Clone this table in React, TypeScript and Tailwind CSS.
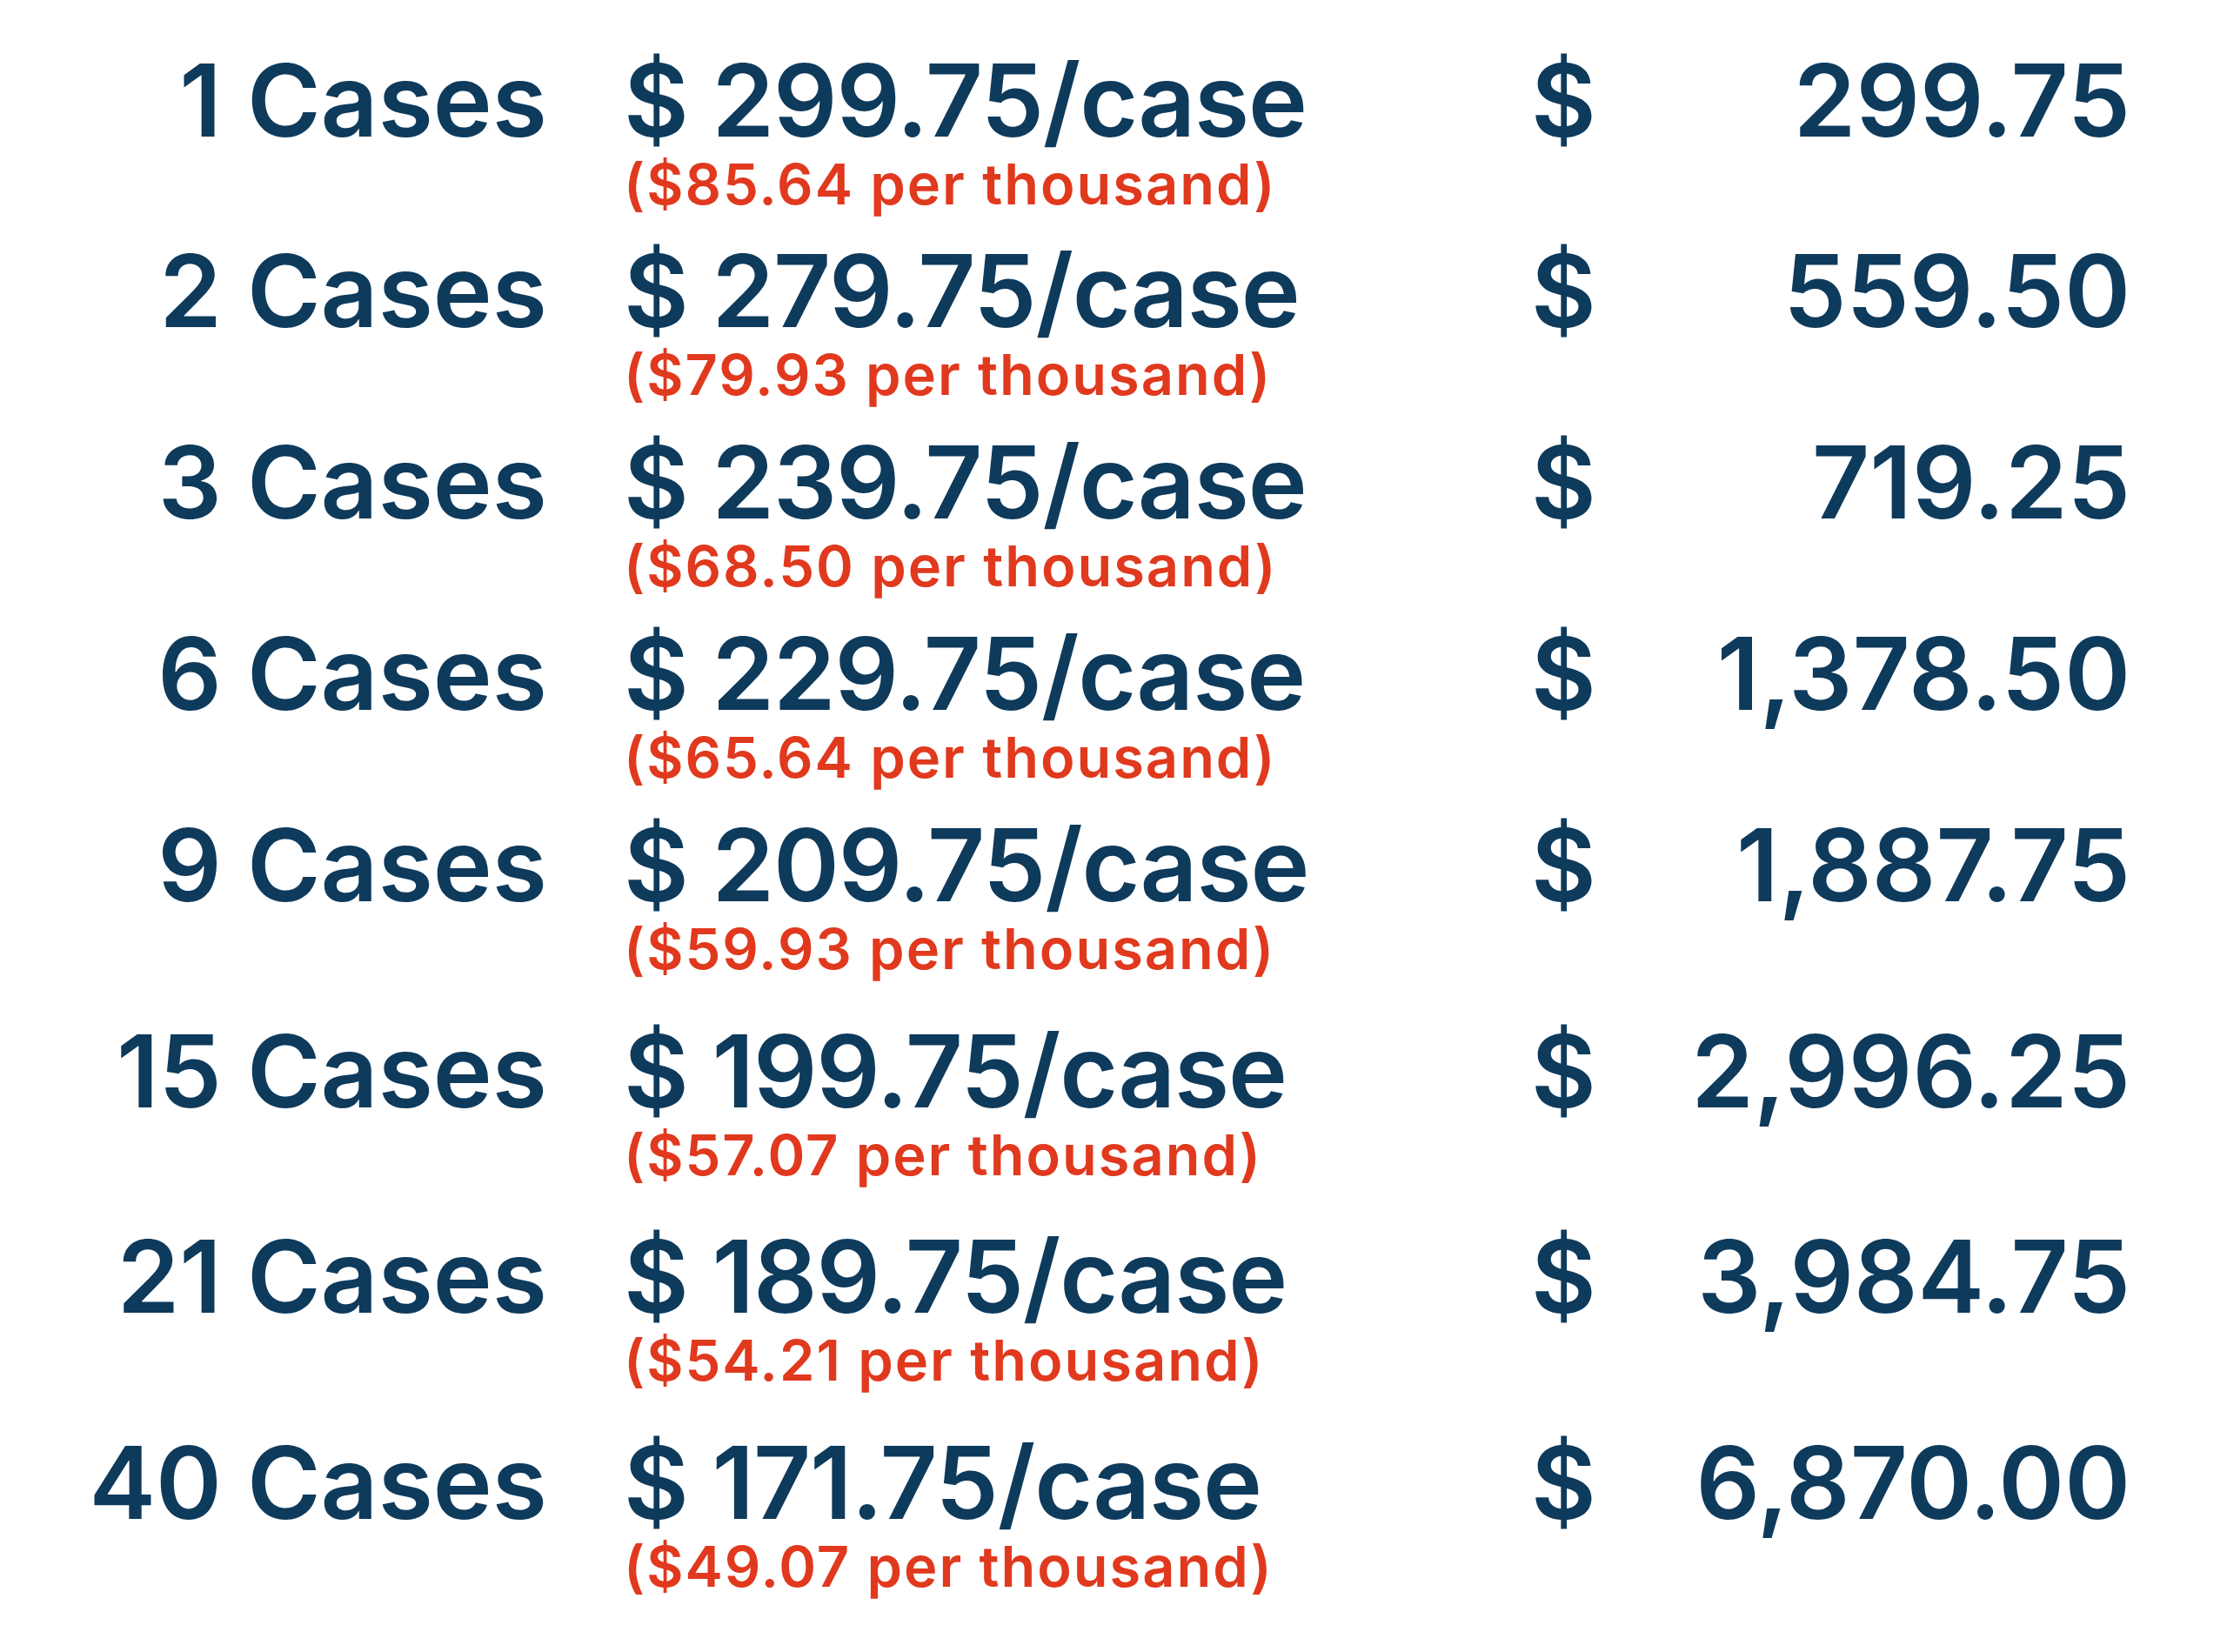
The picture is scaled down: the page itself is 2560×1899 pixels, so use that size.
import React from 'react';

const rows = [
  { qty: '1', price: '299.75', perK: '85.64', total: '299.75', h: 'h-[219px]' },
  { qty: '2', price: '279.75', perK: '79.93', total: '559.50', h: 'h-[220px]' },
  { qty: '3', price: '239.75', perK: '68.50', total: '719.25', h: 'h-[220px]' },
  { qty: '6', price: '229.75', perK: '65.64', total: '1,378.50', h: 'h-[220px]' },
  { qty: '9', price: '209.75', perK: '59.93', total: '1,887.75', h: 'h-[237px]' },
  { qty: '15', price: '199.75', perK: '57.07', total: '2,996.25', h: 'h-[236px]' },
  { qty: '21', price: '189.75', perK: '54.21', total: '3,984.75', h: 'h-[237px]' },
  { qty: '40', price: '171.75', perK: '49.07', total: '6,870.00', h: 'h-[140px]' },
];

function PriceRow({ row }: { row: (typeof rows)[number] }) {
  return (
    <div className={`flex items-start ${row.h}`}>
      <div className="w-[629px] text-right text-[115px] leading-[116px] whitespace-nowrap">{row.qty} Cases</div>
      <div className="w-[1131px] pl-[88px] flex flex-col">
        <div className="text-[115px] leading-[116px] tracking-[-0.01em] whitespace-nowrap">$ {row.price}/case</div>
        <div className="mt-[8px] text-[65px] leading-[60px] tracking-[0.03em] text-[#e0391e] whitespace-nowrap">
          (${row.perK} per thousand)
        </div>
      </div>
      <div className="w-[65px] text-[115px] leading-[116px]">$</div>
      <div className="w-[624px] text-right text-[115px] leading-[116px] whitespace-nowrap">{row.total}</div>
    </div>
  );
}

export default function App() {
  return (
    <div className="min-h-screen w-[2560px] bg-white pt-[58px] font-semibold text-[#0e3a5c] font-['Inter',sans-serif]">
      {rows.map((row, i) => (
        <PriceRow row={row} key={i} />
      ))}
    </div>
  );
}
